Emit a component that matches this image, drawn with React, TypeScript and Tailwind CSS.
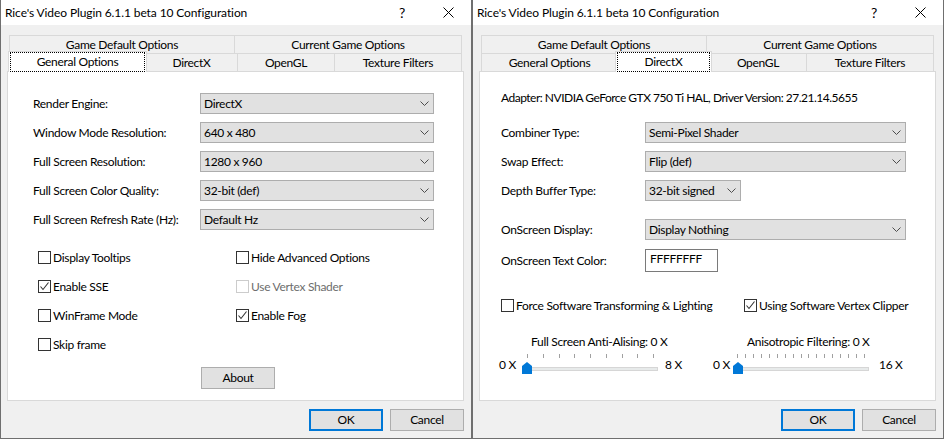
import type { ReactNode } from "react";

type TabDef = { id: string; label: string; w: string };

const backRow: TabDef[] = [
  { id: "gamedef", label: "Game Default Options", w: "w-[226px]" },
  { id: "current", label: "Current Game Options", w: "w-[228px]" },
];

const frontRow: TabDef[] = [
  { id: "general", label: "General Options", w: "w-[137px]" },
  { id: "directx", label: "DirectX", w: "w-[93px]" },
  { id: "opengl", label: "OpenGL", w: "w-[98px]" },
  { id: "texture", label: "Texture Filters", w: "w-[128px]" },
];

function Tab({ tab, selected, first }: { tab: TabDef; selected: boolean; first: boolean }) {
  return (
    <div className={`relative h-[18px] shrink-0 ${tab.w} ${first ? "" : "-ml-px"}`}>
      <div className="flex h-full items-center justify-center border border-b-0 border-[#d9d9d9] bg-[#f0f0f0]">
        {tab.label}
      </div>
      {selected && (
        <div
          className={`absolute -top-[2px] -bottom-px z-10 flex border border-b-0 border-[#d9d9d9] bg-white px-px ${
            first ? "-left-px -right-px" : "-left-[2px] -right-[2px]"
          }`}
        >
          <div className="flex flex-1 items-center justify-center border border-dotted border-black">
            {tab.label}
          </div>
        </div>
      )}
    </div>
  );
}

function Chevron() {
  return (
    <svg width="9" height="5" viewBox="0 0 9 5" className="shrink-0">
      <polyline points="0.5,0.5 4.5,4.5 8.5,0.5" fill="none" stroke="#4d4d4d" strokeWidth="1" />
    </svg>
  );
}

function Select({ value, w = "w-full" }: { value: string; w?: string }) {
  return (
    <div className={`flex h-[21px] items-center justify-between border border-[#adadad] bg-[#e1e1e1] pl-[3px] pr-[4px] ${w}`}>
      <span>{value}</span>
      <Chevron />
    </div>
  );
}

function Check({ label, checked, disabled }: { label: string; checked?: boolean; disabled?: boolean }) {
  return (
    <div className="flex h-[13px] items-center gap-[2px]">
      <div
        className={`flex h-[13px] w-[13px] shrink-0 items-center justify-center border bg-white ${
          disabled ? "border-[#cccccc]" : "border-[#333333]"
        }`}
      >
        {checked && (
          <svg width="11" height="11" viewBox="0 0 11 11">
            <polyline points="1.5,5.5 4,8.5 9.5,1.5" fill="none" stroke="#333333" strokeWidth="1.1" />
          </svg>
        )}
      </div>
      <span className={`whitespace-nowrap ${disabled ? "text-[#6d6d6d]" : ""}`}>{label}</span>
    </div>
  );
}

function Button({ children, primary }: { children: ReactNode; primary?: boolean }) {
  return (
    <div
      className={`flex h-[22px] w-[74px] items-center justify-center bg-[#e1e1e1] ${
        primary ? "border-2 border-[#0078d7]" : "border border-[#adadad]"
      }`}
    >
      {children}
    </div>
  );
}

function Slider({ ticks, x0, step }: { ticks: number; x0: number; step: number }) {
  return (
    <div className="relative h-[21px] w-[136px] shrink-0">
      {Array.from({ length: ticks }).map((_, i) => (
        <div
          key={i}
          className="absolute top-0 h-[4px] w-px bg-[#a0a0a0]"
          style={{ left: Math.round(x0 + i * step) }}
        />
      ))}
      <div className="absolute left-0 right-0 top-[13px] h-[4px] border border-[#d6d6d6] bg-[#e7eaea]" />
      <svg className="absolute left-0 top-[8px]" width="10" height="12" viewBox="0 0 10 12">
        <path d="M0 4 L5 0 L10 4 L10 12 L0 12 Z" fill="#0078d7" />
      </svg>
    </div>
  );
}

function Window({ active, children }: { active: string; children: ReactNode }) {
  return (
    <div className="flex h-[439px] w-[472px] shrink-0 flex-col border-x border-b border-[#6f6f6f] bg-[#f0f0f0]">
      <div className="flex h-[25px] shrink-0 items-center bg-white">
        <span className="flex-1 pl-[4px] pt-px tracking-[-0.1px]">Rice's Video Plugin 6.1.1 beta 10 Configuration</span>
        <div className="flex h-full w-[46px] items-center justify-center text-[14px]">?</div>
        <div className="flex h-full w-[46px] items-center justify-center">
          <svg width="11" height="11" viewBox="0 0 11 11">
            <path d="M0.5 0.5 L10.5 10.5 M10.5 0.5 L0.5 10.5" stroke="#000" strokeWidth="1" />
          </svg>
        </div>
      </div>
      <div className="pl-[6px] pr-[7px] pt-[10px]">
        <div className="flex pl-[2px]">
          {backRow.map((t, i) => (
            <Tab key={t.id} tab={t} selected={t.id === active} first={i === 0} />
          ))}
        </div>
        <div className="flex pl-[2px]">
          {frontRow.map((t, i) => (
            <Tab key={t.id} tab={t} selected={t.id === active} first={i === 0} />
          ))}
        </div>
        <div className="h-[330px] border border-[#d9d9d9] bg-white">{children}</div>
        <div className="mt-[8px] flex justify-end gap-[7px]">
          <Button primary>OK</Button>
          <Button>Cancel</Button>
        </div>
      </div>
    </div>
  );
}

function GeneralPanel() {
  const rows = [
    ["Render Engine:", "DirectX"],
    ["Window Mode Resolution:", "640 x 480"],
    ["Full Screen Resolution:", "1280 x 960"],
    ["Full Screen Color Quality:", "32-bit (def)"],
    ["Full Screen Refresh Rate (Hz):", "Default Hz"],
  ];
  return (
    <div className="pl-[25px] pr-[29px] pt-[21px]">
      <div className="grid grid-cols-[167px_1fr] items-center gap-y-[8px]">
        {rows.map(([label, value]) => (
          <div key={label} className="contents">
            <span>{label}</span>
            <Select value={value} />
          </div>
        ))}
      </div>
      <div className="ml-[5px] mt-[21px] grid grid-cols-[198px_1fr] gap-y-[16px]">
        <Check label="Display Tooltips" />
        <Check label="Hide Advanced Options" />
        <Check label="Enable SSE" checked />
        <Check label="Use Vertex Shader" disabled />
        <Check label="WinFrame Mode" />
        <Check label="Enable Fog" checked />
        <Check label="Skip frame" />
      </div>
      <div className="ml-[168px] mt-[16px]">
        <Button>About</Button>
      </div>
    </div>
  );
}

function DirectXPanel() {
  return (
    <div className="pl-[21px] pr-[29px] pt-[19px]">
      <div className="tracking-[-0.5px]">Adapter: NVIDIA GeForce GTX 750 Ti HAL, Driver Version: 27.21.14.5655</div>
      <div className="mt-[17px] grid grid-cols-[144px_1fr] items-center gap-y-[8px]">
        <span>Combiner Type:</span>
        <Select value="Semi-Pixel Shader" />
        <span>Swap Effect:</span>
        <Select value="Flip (def)" />
        <span>Depth Buffer Type:</span>
        <Select value="32-bit signed" w="w-[96px]" />
      </div>
      <div className="mt-[18px] grid grid-cols-[144px_1fr] items-center gap-y-[9px]">
        <span>OnScreen Display:</span>
        <Select value="Display Nothing" />
        <span>OnScreen Text Color:</span>
        <div className="h-[23px] w-[73px] border border-[#7a7a7a] bg-white pl-[4px] pt-[2px]">FFFFFFFF</div>
      </div>
      <div className="mt-[27px] grid grid-cols-[243px_1fr]">
        <Check label="Force Software Transforming & Lighting" />
        <Check label="Using Software Vertex Clipper" checked />
      </div>
      <div className="-ml-[2px] mt-[23px] flex">
        <div className="flex w-[214px] flex-col">
          <span className="ml-[32px]">Full Screen Anti-Alising: 0 X</span>
          <div className="mt-[5px] flex items-center">
            <span className="w-[23px] shrink-0">0 X</span>
            <Slider ticks={9} x0={5} step={15.75} />
            <span className="ml-[7px]">8 X</span>
          </div>
        </div>
        <div className="flex flex-col">
          <span className="ml-[34px]">Anisotropic Filtering: 0 X</span>
          <div className="mt-[5px] flex items-center">
            <span className="w-[20px] shrink-0">0 X</span>
            <Slider ticks={17} x0={4} step={7.94} />
            <span className="ml-[10px]">16 X</span>
          </div>
        </div>
      </div>
    </div>
  );
}

export default function App() {
  return (
    <div className="flex h-[439px] w-[944px] overflow-hidden bg-[#6f6f6f] font-['Lato',sans-serif] text-[12px] leading-[14px] tracking-[-0.3px] text-black">
      <Window active="general">
        <GeneralPanel />
      </Window>
      <Window active="directx">
        <DirectXPanel />
      </Window>
    </div>
  );
}
